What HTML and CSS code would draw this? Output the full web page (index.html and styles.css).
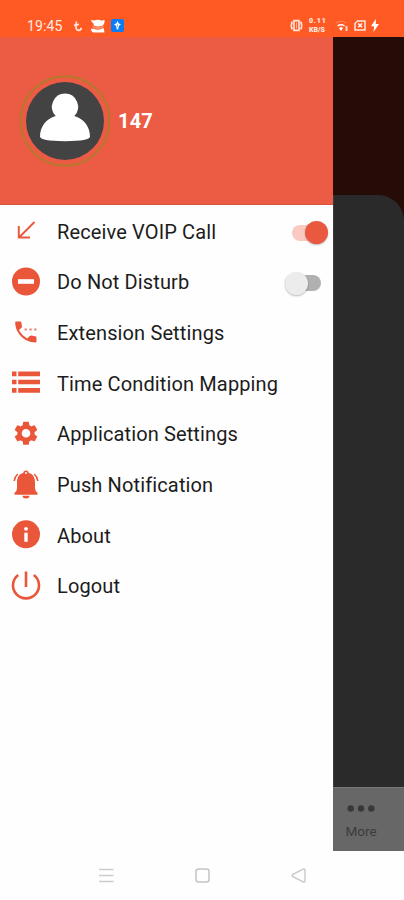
FILE: index.html
```html
<!DOCTYPE html>
<html lang="en">
<head>
<meta charset="utf-8">
<title>Menu</title>
<link rel="stylesheet" href="styles.css">
</head>
<body>
<header class="status">
  <div class="status-left">
    <span class="clock">19:45</span>
    <svg class="s-call" width="8" height="12" viewBox="0 0 8 12"><path d="M2.6 1.5C1.4 4.5 1.4 10.3 4.6 10.3 6.4 10.3 7.2 9 7.2 7.8M0 5.3 5 4.3" fill="none" stroke="#ffe5dc" stroke-width="1.7"/></svg>
    <svg class="s-face" width="14" height="14" viewBox="0 0 14 14"><path d="M0 1 3.2 1.6Q7-.4 10.8 1.8L13.5.8Q14 4.7 11.8 6.4 7 8.4 2.8 6.5L2.4 4.3Q.5 3.5 0 1ZM0 9.8H3Q7 12 12.7 9L13.5 13.5H2.5Q0 13 0 9.8Z" fill="#fff"/><path d="M1.6 7.4Q7 11 12.6 7.4" fill="none" stroke="#ffc0a8"/></svg>
    <svg class="s-app" width="13" height="13" viewBox="0 0 13 13"><rect width="13" height="13" rx="2" fill="#087bf5"/><path d="M6.5 2 7.8 4.5 10 5.2 7.8 7 7.2 10.5H5.8L5.2 7 3 5.2 5.2 4.5Z" fill="#fff"/><path d="M6.5 5V8" stroke="#6cb1fa" stroke-width=".8"/></svg>
  </div>
  <div class="status-right">
    <svg width="13" height="13" viewBox="0 0 13 13"><path d="M4 1.6H9V11.4H4ZM2.3 2.6Q.3 6.5 2.3 10.4M10.7 2.6Q12.7 6.5 10.7 10.4" fill="none" stroke="#ffe5dc" stroke-width="1.6"/><path d="M6.5 3.5V9.5" stroke="#ffb596"/></svg>
    <div class="speed"><span>0.11</span><span>KB/S</span></div>
    <svg class="s-wifi" width="13" height="12" viewBox="0 0 13 12"><path d="M0 3Q5-.5 10 3" fill="none" stroke="#ff8c62" stroke-width="1"/><path d="M1.6 6Q5 3.4 8.5 6" fill="none" stroke="#fff" stroke-width="1.5"/><path d="M3 8 5 7 7 8 5 11Z" fill="#fff"/><path d="M10.5 6V11" stroke="#ffd3c3" stroke-width="2"/></svg>
    <svg class="s-sim" width="12" height="11" viewBox="0 0 12 11"><path d="M3.5 1H11V10H1V3.5Z" fill="none" stroke="#ffe5dc" stroke-width="1.5"/><path d="M4.2 3.5 8 7.3M8 3.5 4.2 7.3" stroke="#fff" stroke-width="1.3"/></svg>
    <svg class="s-bolt" width="8" height="13" viewBox="0 0 8 13"><path d="M4.8 0 0 7.2H3.1L2.5 13 8 5H4.8Z" fill="#fff"/></svg>
  </div>
</header>

<main class="screen">
  <aside class="drawer">
    <section class="profile">
      <svg width="92" height="92" viewBox="0 0 92 92"><circle cx="46" cy="46" r="44.6" fill="none" stroke="#b17a2d" stroke-width="1.7"/><circle cx="46" cy="46" r="39" fill="#434343"/><path d="M46 18.5a13.2 13.2 0 0 1 9.3 22.4C64.8 43.7 71 51.5 71 61.5Q71 66 46 66.2 21 66 21 61.5C21 51.5 27.2 43.7 36.7 40.9A13.2 13.2 0 0 1 46 18.5Z" fill="#fff"/></svg>
      <span class="ext">147</span>
    </section>
    <nav class="menu">
      <div class="row"><svg class="icon" viewBox="0 0 28 28"><path d="M22.5 5 7.5 20M6.8 9V20.5H18" fill="none" stroke="#e95a3f" stroke-width="2"/></svg><span class="label">Receive VOIP Call</span><span class="switch on"><i class="track"></i><i class="thumb"></i></span></div>
      <div class="row"><svg class="icon" viewBox="0 0 28 28"><circle cx="14" cy="13.5" r="14" fill="#e95639"/><path d="M6 13.5H22" stroke="#fff" stroke-width="4.6"/></svg><span class="label">Do Not Disturb</span><span class="switch off"><i class="track"></i><i class="thumb"></i></span></div>
      <div class="row"><svg class="icon" viewBox="0 0 28 28"><path d="M4.2 2.5H8.2Q9.3 2.5 9.4 3.8L10 7.5Q10 8.3 9.4 8.8L6.9 11.3Q10 16.7 15.2 19.6L17.7 17.1Q18.3 16.5 19.2 16.6L23.3 17.3Q24.5 17.5 24.5 18.6V22.5Q24.5 23.5 23.3 23.5C12.4 23.5 3.2 14 3.2 3.6Q3.2 2.5 4.2 2.5Z" fill="#e95639"/><path d="M12.5 10.5H15M17.3 10.5H19.8M22.1 10.5H24.6" stroke="#e98b79" stroke-width="2.2"/></svg><span class="label">Extension Settings</span></div>
      <div class="row"><svg class="icon" viewBox="0 0 28 28"><path d="M0 4.9H4.5M6.2 4.9H28M0 13H4.5M6.2 13H28M0 21.4H4.5M6.2 21.4H28" stroke="#e95639" stroke-width="4.6"/></svg><span class="label">Time Condition Mapping</span></div>
      <div class="row"><svg class="icon" viewBox="0 0 28 28"><g transform="translate(14 13.3) scale(1.2) translate(-12 -12)"><path fill="#e95639" d="M19.14 12.94c.04-.3.06-.61.06-.94s-.02-.64-.07-.94l2.03-1.58a.49.49 0 0 0 .12-.61l-1.92-3.32a.49.49 0 0 0-.59-.22l-2.39.96a7 7 0 0 0-1.62-.94l-.36-2.54A.48.48 0 0 0 13.92 2.4h-3.84a.48.48 0 0 0-.48.41l-.36 2.54a7 7 0 0 0-1.62.94l-2.39-.96a.49.49 0 0 0-.59.22L2.72 8.87a.48.48 0 0 0 .12.61l2.03 1.58a6 6 0 0 0 0 1.88l-2.03 1.58a.49.49 0 0 0-.12.61l1.92 3.32c.12.22.37.29.59.22l2.39-.96c.5.38 1.03.7 1.62.94l.36 2.54c.05.24.24.41.48.41h3.84c.24 0 .44-.17.47-.41l.36-2.54a7 7 0 0 0 1.62-.94l2.39.96c.22.08.47 0 .59-.22l1.92-3.32a.48.48 0 0 0-.12-.61ZM12 15.6A3.6 3.6 0 1 1 12 8.4a3.6 3.6 0 0 1 0 7.2Z"/></g></svg><span class="label">Application Settings</span></div>
      <div class="row"><svg class="icon" viewBox="0 0 28 28"><path d="M14 -.5a2.8 2.8 0 0 1 2.8 2.6C21.5 3.3 23 7.1 23 11.3V17.3Q23 20.3 25.5 21.8V23.7H2.5V21.8Q5 20.3 5 17.3V11.3C5 7.1 6.5 3.3 11.2 2.1A2.8 2.8 0 0 1 14-.5ZM10.5 24.7H17.5A3.5 2.8 0 0 1 10.5 24.7Z" fill="#e95639"/><circle cx="14" cy="2" r="1" fill="#fff"/><path d="M5.8 3Q2.8 5.5 2.2 10M22.2 3Q25.2 5.5 25.8 10" fill="none" stroke="#e95639" stroke-width="1.6"/></svg><span class="label">Push Notification</span></div>
      <div class="row"><svg class="icon" viewBox="0 0 28 28"><circle cx="14" cy="13.3" r="14" fill="#e95639"/><circle cx="14" cy="7.8" r="1.9" fill="#fff"/><path d="M14 11.7V20.8" stroke="#fff" stroke-width="3.4"/></svg><span class="label">About</span></div>
      <div class="row"><svg class="icon" viewBox="0 0 28 28"><path d="M6.2 3A13 13 0 1 0 21.8 3M14-.5V15" fill="none" stroke="#e95639" stroke-width="2.6"/></svg><span class="label">Logout</span></div>
    </nav>
  </aside>
  <div class="behind">
    <div class="panel"></div>
    <div class="tab"><svg width="28" height="7" viewBox="0 0 28 7"><circle cx="3.7" cy="3.5" r="3.2" fill="#383838"/><circle cx="14" cy="3.5" r="3.2" fill="#383838"/><circle cx="24.3" cy="3.5" r="3.2" fill="#383838"/></svg><span>More</span></div>
  </div>
</main>

<footer class="system">
  <svg width="15" height="15" viewBox="0 0 15 15"><path d="M0 1.5H14.5M0 7.5H14.5M0 13.5H14.5" stroke="#ccc" stroke-width="1.5"/></svg>
  <svg width="15" height="15" viewBox="0 0 15 15"><rect x="1" y="1" width="13" height="13" rx="2.5" fill="none" stroke="#c4c4c4" stroke-width="1.5"/></svg>
  <svg width="15" height="15" viewBox="0 0 15 15"><path d="M1.5 6.7 12 1.2Q14 .5 14 2V13Q14 14.5 12 13.8L1.5 8.3Q.5 7.5 1.5 6.7Z" fill="none" stroke="#c8c8c8" stroke-width="1.4"/></svg>
</footer>
</body>
</html>
```
FILE: styles.css
```css
* { box-sizing: border-box; }
body {
  margin: 0;
  width: 404px;
  height: 900px;
  display: flex;
  flex-direction: column;
  overflow: hidden;
  background: #fefefe;
  font-family: Roboto, sans-serif;
}
svg { display: block; flex: none; overflow: visible; }

.status {
  height: 37px;
  padding: 13px 25px 0 27px;
  display: flex;
  justify-content: space-between;
  align-items: flex-start;
  background: #ff5a24;
  color: #ffe9e1;
}
.status-left, .status-right { display: flex; align-items: center; height: 25px; }
.clock { font-size: 14px; letter-spacing: 0.1px; width: 47px; }
.s-face { margin-left: 9px; }
.s-app { margin-left: 6px; }
.speed {
  width: 18px;
  margin-left: 6px;
  display: flex;
  flex-direction: column;
  font-size: 7px;
  line-height: 9px;
  font-weight: 900;
  white-space: nowrap;
}
.speed span:first-child { letter-spacing: 0.8px; }
.s-wifi { margin-left: 9px; }
.s-sim { margin-left: 5px; }
.s-bolt { margin-left: 5px; }

.screen { height: 814px; display: flex; }
.drawer { width: 333px; background: #fefefe; }
.profile {
  height: 168px;
  padding: 0 0 0 19px;
  display: flex;
  align-items: center;
  gap: 7px;
  background: #ec5c44;
  border-bottom: 1px solid #d6533d;
}
.ext { color: #fff; font-size: 20px; font-weight: 700; letter-spacing: 0.2px; padding-top: 1px; }

.menu { display: flex; flex-direction: column; padding-top: 1px; }
.row {
  height: 50.65px;
  padding: 0 4px 0 12px;
  display: flex;
  align-items: center;
}
.icon { width: 28px; height: 28px; }
.label { flex: 1; margin-left: 17px; padding-top: 1px; font-size: 20px; letter-spacing: 0.13px; color: #1c1c1c; white-space: nowrap; }

.switch { display: flex; align-items: center; padding-top: 3px; }
.track { width: 36px; height: 16px; border-radius: 8px; background: #f9c9c2; }
.thumb { width: 23px; height: 23px; border-radius: 50%; background: #e9593f; box-shadow: 0 1px 2px #0004; z-index: 1; }
.on { margin-right: 1px; }
.on .track { margin-right: -23px; }
.off { flex-direction: row-reverse; margin-right: 8px; }
.off .track { margin-left: -23px; background: #b0b0b0; }
.off .thumb { background: #ececec; }

.behind {
  width: 71px;
  padding-top: 158px;
  display: flex;
  flex-direction: column;
  background: #260c07;
}
.panel { flex: 1; border-top-right-radius: 26px; background: #2a2a2a; border-left: 1px solid #3b3b3b; }
.tab {
  height: 64px;
  padding: 17px 15px 0 0;
  display: flex;
  flex-direction: column;
  align-items: center;
  gap: 11px;
  background: #676767;
  border-top: 1px solid #777;
  color: #3c3c3c;
  font-size: 13.5px;
  line-height: 17px;
}

.system { flex: 1; display: flex; justify-content: space-between; padding: 17px 98px 0 99px; }
```
